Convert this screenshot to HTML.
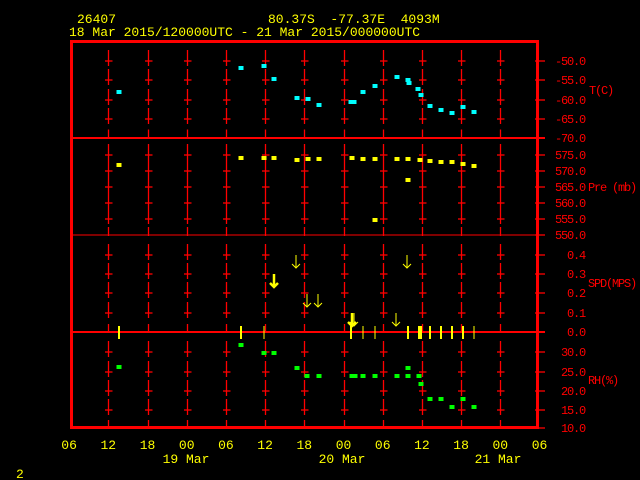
<!DOCTYPE html>
<html><head><meta charset="utf-8"><style>
html,body{margin:0;padding:0;background:#000;width:640px;height:480px;overflow:hidden}
svg{display:block}
text{font-family:"Liberation Mono",monospace;font-size:13px;white-space:pre}
.sm{font-size:12px;letter-spacing:-1.2px}
</style></head><body>
<svg id="s" width="640" height="480" xmlns="http://www.w3.org/2000/svg" xml:space="preserve">
<rect width="640" height="480" fill="#000"/>
<g fill="#ffff00">
<text x="77" y="23">26407</text>
<text x="268" y="23">80.37S  -77.37E  4093M</text>
<text x="69" y="36">18 Mar 2015/120000UTC - 21 Mar 2015/000000UTC</text>
<text x="16" y="478">2</text>
</g>
<g id="grid" stroke="#ff0000" stroke-width="1.3"></g>
<line x1="70" y1="138" x2="545" y2="138" stroke="#ff0000" stroke-width="2"/>
<line x1="70" y1="235" x2="545" y2="235" stroke="#ff0000" stroke-width="1"/>
<line x1="70" y1="332" x2="545" y2="332" stroke="#ff0000" stroke-width="2"/>
<rect x="71.5" y="41.5" width="466" height="386" fill="none" stroke="#ff0000" stroke-width="3"/>
<g id="lab" fill="#ff0000" text-anchor="end" class="sm"></g>
<g fill="#ff0000" class="sm">
<text class="sm" x="589" y="94">T(C)</text>
<text class="sm" x="588" y="191">Pre (mb)</text>
<text class="sm" x="588" y="287">SPD(MPS)</text>
<text class="sm" x="588" y="384">RH(%)</text>
</g>
<g id="bot" fill="#ffff00" text-anchor="middle"></g>
<g id="pts"></g>
</svg>
<script>
var NS="http://www.w3.org/2000/svg";
function el(p,t,a,txt){var e=document.createElementNS(NS,t);for(var k in a)e.setAttribute(k,a[k]);if(txt!==undefined)e.textContent=txt;document.getElementById(p).appendChild(e);}
var ys=[61,80,100,119,129.5,155,171,187,203,219,227,255,274,293,313,324,352,372,391,410,420];
var stubs={129.5:1,227:1,324:1,420:1};
for(var i=0;i<11;i++){var x=Math.round(108.3+39.2*i)+0.5;
 ys.forEach(function(y){
  if(stubs[y]){el("grid","line",{x1:x,y1:y,x2:x,y2:y+9});}
  else{el("grid","line",{x1:x,y1:y-11,x2:x,y2:y+5});el("grid","line",{x1:x-3.5,y1:y,x2:x+4,y2:y});}
 });}
var L=[[61,"-50.0"],[80,"-55.0"],[100,"-60.0"],[119,"-65.0"],[138,"-70.0"],[155,"575.0"],[171,"570.0"],[187,"565.0"],[203,"560.0"],[219,"555.0"],[235,"550.0"],[255,"0.4"],[274,"0.3"],[293,"0.2"],[313,"0.1"],[332,"0.0"],[352,"30.0"],[372,"25.0"],[391,"20.0"],[410,"15.0"],[428,"10.0"]];
L.forEach(function(l){el("grid","line",{x1:535,y1:l[0],x2:545,y2:l[0]});el("lab","text",{x:585,y:l[0]+4,"class":"sm"},l[1]);});
var hrs=["06","12","18","00","06","12","18","00","06","12","18","00","06"];
for(var i=0;i<13;i++){el("bot","text",{x:69.1+39.2*i,y:449},hrs[i]);}
el("bot","text",{x:186,y:463},"19 Mar");el("bot","text",{x:342,y:463},"20 Mar");el("bot","text",{x:498,y:463},"21 Mar");
function sq(c,a){a.forEach(function(p){el("pts","rect",{x:p[0]-2.5,y:p[1]-2,width:5,height:4,fill:c});});}
sq("#00ffff",[[119,92],[241,68],[264,66],[274,79],[297,98],[308,99],[319,105],[351,102],[354,102],[363,92],[375,86],[397,77],[408,80],[409,83],[418,89],[421,95],[430,106],[441,110],[452,113],[463,107],[474,112]]);
sq("#ffff00",[[119,165],[241,158],[264,158],[274,158],[297,160],[308,159],[319,159],[352,158],[363,159],[375,159],[397,159],[408,159],[408,180],[420,160],[430,161],[441,162],[452,162],[463,164],[474,166],[375,220]]);
sq("#00ff00",[[119,367],[241,345],[264,353],[274,353],[297,368],[307,376],[319,376],[352,376],[355,376],[363,376],[375,376],[397,376],[408,368],[408,376],[419,376],[421,384],[430,399],[441,399],[452,407],[463,399],[474,407]]);
var bars=[[119,2],[241,2],[264,1],[351,2],[363,1],[375,1],[408,2],[420,4],[430,2],[441,2],[452,2],[463,2],[474,1]];
bars.forEach(function(b){el("pts","rect",{x:b[0]-b[1]/2,y:326,width:b[1],height:13,fill:"#ffff00"});});
function arr(x,y,w){el("pts","path",{d:"M"+x+" "+y+"V"+(y+13)+"M"+(x-4)+" "+(y+9)+"L"+x+" "+(y+13)+"L"+(x+4)+" "+(y+9),stroke:"#ffff00","stroke-width":w,fill:"none"});}
arr(296,255,1);arr(274,274,2.5);arr(307,294,1);arr(318,294,1);arr(352,313,2.5);arr(354,313,1);arr(407,255,1);arr(396,313,1);
</script>
</body></html>
